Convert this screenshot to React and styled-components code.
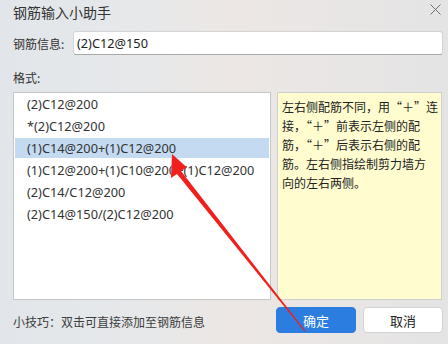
import React, { useState } from "react";
import styled, { createGlobalStyle } from "styled-components";

const formats = [
  "(2)C12@200",
  "*(2)C12@200",
  "(1)C14@200+(1)C12@200",
  "(1)C12@200+(1)C10@200+(1)C12@200",
  "(2)C14/C12@200",
  "(2)C14@150/(2)C12@200",
];

const hintLines = [
  "左右侧配筋不同，用“+”连",
  "接，“+”前表示左侧的配",
  "筋，“+”后表示右侧的配",
  "筋。左右侧指绘制剪力墙方",
  "向的左右两侧。",
];

function App() {
  const [info, setInfo] = useState("(2)C12@150");
  const [selected, setSelected] = useState(2);

  return (
    <>
      <GlobalStyle />
      <Dialog>
        <TitleBar>
          <Title>钢筋输入小助手</Title>
          <CloseButton aria-label="close">
            <svg width="11" height="11" viewBox="0 0 11 11">
              <path d="M0.5 0.5 L10.5 10.5 M10.5 0.5 L0.5 10.5" stroke="#6f6f6f" strokeWidth="1" />
            </svg>
          </CloseButton>
        </TitleBar>

        <InfoRow>
          <Label>钢筋信息:</Label>
          <Input value={info} onChange={(e) => setInfo(e.target.value)} />
        </InfoRow>

        <SectionLabel>格式:</SectionLabel>

        <Body>
          <FormatList>
            {formats.map((f, i) => (
              <FormatItem
                key={f}
                $active={i === selected}
                onClick={() => setSelected(i)}
                onDoubleClick={() => setInfo(f)}
              >
                {f}
              </FormatItem>
            ))}
          </FormatList>
          <HintBox lang="zh-CN">
            {hintLines.map((l) => (
              <HintLine key={l}>{l}</HintLine>
            ))}
          </HintBox>
        </Body>

        <Footer>
          <Tip>小技巧：双击可直接添加至钢筋信息</Tip>
          <Button $primary>确定</Button>
          <Button>取消</Button>
        </Footer>

        <Arrow width="140" height="180" viewBox="0 0 140 180">
          <polygon
            points="2,1 17,14.5 11,18 135.5,178 134.5,178.5 7,21 1,25"
            fill="#f1201c"
          />
        </Arrow>
      </Dialog>
    </>
  );
}

export default App;

const GlobalStyle = createGlobalStyle`
  html, body {
    margin: 0;
    padding: 0;
  }
  body {
    font-family: "Noto Sans", "Noto Sans CJK SC", sans-serif;
    color: #333;
  }
`;

const Dialog = styled.div`
  position: relative;
  width: 448px;
  height: 344px;
  box-sizing: border-box;
  padding: 0 5px 0 13px;
  overflow: hidden;
  background: linear-gradient(
    90deg,
    #e2e6ea 0%,
    #e6e8ea 30%,
    #ece7e4 52%,
    #e9e6e5 70%,
    #e4e4e4 100%
  );
  display: flex;
  flex-direction: column;
`;

const TitleBar = styled.div`
  height: 24px;
  display: flex;
  align-items: center;
  justify-content: space-between;
`;

const Title = styled.div`
  font-family: "Noto Sans CJK SC", sans-serif;
  font-size: 14px;
  color: #333;
  margin-top: -1px;
`;

const CloseButton = styled.div`
  width: 14px;
  height: 14px;
  display: flex;
  align-items: center;
  justify-content: center;
  margin: -5px 1px 0 0;
`;

const InfoRow = styled.div`
  display: flex;
  align-items: center;
  margin-top: 7px;
  height: 24px;
`;

const Label = styled.div`
  font-family: "Noto Sans CJK SC", sans-serif;
  font-size: 12px;
  color: #333;
  width: 60px;
`;

const Input = styled.input`
  flex: 1;
  height: 24px;
  box-sizing: border-box;
  border: 1px solid #d3d3d3;
  border-bottom-color: #a9a9a9;
  border-radius: 3px;
  background: #fff;
  padding: 0 3px;
  font-family: "Noto Sans", "Noto Sans CJK SC", sans-serif;
  font-size: 12.75px;
  color: #222;
  outline: none;
`;

const SectionLabel = styled.div`
  font-family: "Noto Sans CJK SC", sans-serif;
  font-size: 12px;
  line-height: 14px;
  margin-top: 16px;
  color: #333;
`;

const Body = styled.div`
  display: grid;
  grid-template-columns: 258px 165px;
  column-gap: 6px;
  height: 208px;
  margin-top: 7px;
`;

const FormatList = styled.div`
  background: #fff;
  border: 1px solid #c6c6c6;
  padding: 0 1px;
  display: flex;
  flex-direction: column;
`;

const FormatItem = styled.div`
  height: 20px;
  margin: 1px 0;
  line-height: 20px;
  padding-left: 12px;
  font-size: 12.75px;
  color: #333;
  white-space: nowrap;
  background: ${(p) => (p.$active ? "#c3daf1" : "transparent")};
  cursor: default;
`;

const HintBox = styled.div`
  background: #fffdd0;
  border: 1px solid #cfcfcf;
  padding: 4px 0 4px 4px;
  overflow: hidden;
  font-family: "Noto Sans CJK SC", sans-serif;
  font-feature-settings: "fwid" 1;
  font-size: 12px;
  color: #222;
`;

const HintLine = styled.div`
  line-height: 19px;
  white-space: nowrap;
`;

const Footer = styled.div`
  display: flex;
  align-items: center;
  margin-top: 7px;
  height: 26px;
`;

const Tip = styled.div`
  flex: 1;
  font-family: "Noto Sans CJK SC", sans-serif;
  font-size: 12px;
  color: #3c3c3c;
  margin-top: 2px;
`;

const Button = styled.div`
  width: 80px;
  height: 26px;
  box-sizing: border-box;
  margin-left: ${(p) => (p.$primary ? "0" : "7px")};
  border-radius: 4px;
  display: flex;
  align-items: center;
  justify-content: center;
  font-family: "Noto Sans CJK SC", sans-serif;
  font-size: 13px;
  background: ${(p) => (p.$primary ? "#2b7de0" : "#fff")};
  color: ${(p) => (p.$primary ? "#fff" : "#222")};
  border: 1px solid ${(p) => (p.$primary ? "#2b7de0" : "#d2d2d2")};
`;

const Arrow = styled.svg`
  position: absolute;
  left: 170px;
  top: 153px;
  pointer-events: none;
`;
